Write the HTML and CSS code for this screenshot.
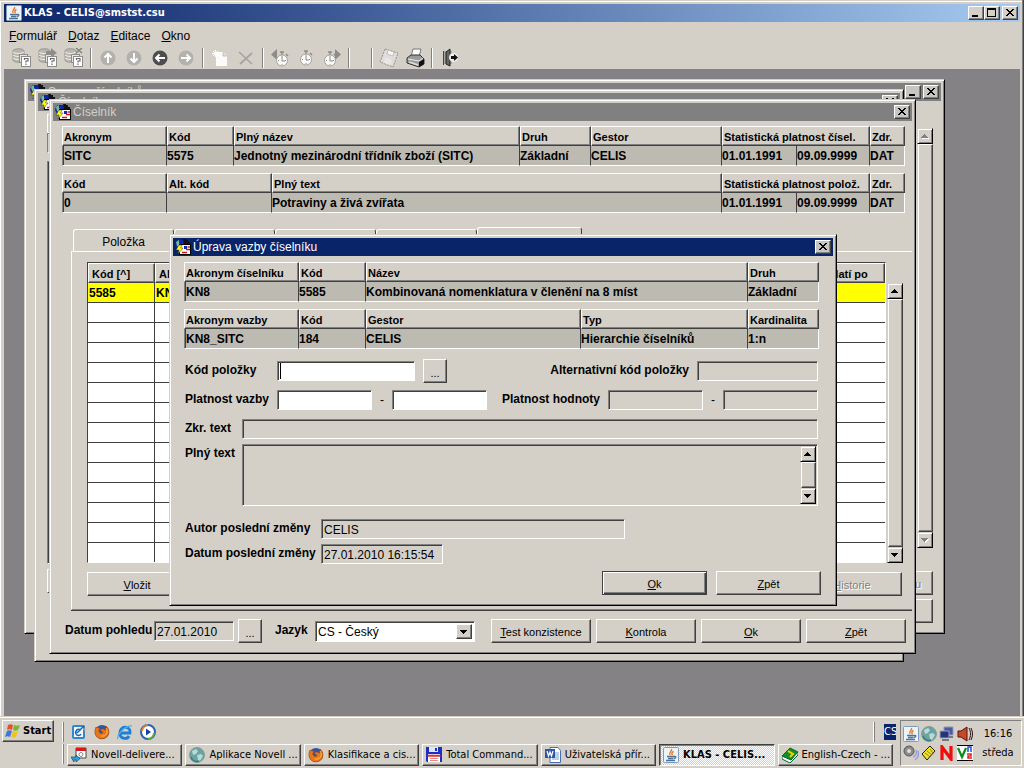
FILE: index.html
```html
<!DOCTYPE html>
<html lang="cs">
<head>
<meta charset="utf-8">
<title>KLAS - CELIS@smstst.csu</title>
<link rel="stylesheet" href="styles.css">
</head>
<body>
<svg class="defs" aria-hidden="true">
  <symbol id="i-java" viewBox="0 0 16 16"><rect x=".5" y=".5" width="15" height="15" rx="1" fill="#eef3f8" stroke="#7d9cba"/><path d="M8.500 2c1 2-3 3-1.500 6M10.500 4.500c-2 1-2 2-1 3.500" stroke="#e8761c" stroke-width="1.400" fill="none"/><path d="M4 9.500h7M11 9.500c3-.5 2 2-.5 2M5 11.500h5M3 13.500h9" stroke="#4b7399" stroke-width="1.300" fill="none"/></symbol>
  <symbol id="i-form" viewBox="0 0 16 16"><path d="M1 3l2-2h5l3 3v5l-4 3-5-2-2-4z" fill="#1424a8"/><path d="M1 3l3-2v3l2 2-1 3-3-2z" fill="#6fbe9c"/><path d="M8 0h3v1h2v2h2v2H9z" fill="#111"/><rect x="4" y="5" width="12" height="11" fill="#000"/><rect x="5" y="6" width="10" height="9" fill="#fff"/><path d="M9 7h3v3H9z" fill="#1428b4"/><path d="M12.500 8H15M11 10.500h4M7 13.500h5" stroke="#d01818" stroke-width="1.300"/><path d="M4 6h3L5.500 9H8l-5 6 1-4H1z" fill="#ff0" stroke="#333" stroke-width=".5"/></symbol>
  <symbol id="i-close" viewBox="0 0 16 14"><path d="M4 3h2v1h1v1h2V4h1V3h2v1h-1v1h-1v1H9v1h1v1h1v1h1v1h-2V9H9V8H7v1H6v1H4V9h1V8h1V7h1V6H6V5H5V4H4z" fill="#000"/></symbol>
  <symbol id="i-up" viewBox="0 0 16 16"><path d="M7 6h1v1h1v1h1v1h1v1H4V9h1V8h1V7h1z"/></symbol>
  <symbol id="i-down" viewBox="0 0 16 16"><path d="M4 6h7v1h-1v1H9v1H8v1H7V9H6V8H5V7H4z"/></symbol>
  <symbol id="i-query" viewBox="0 0 20 20"><path d="M1 3c0-3 11-3 11 0v9c0 3-11 3-11 0z" fill="#bab7b0" stroke="#8d8b87" stroke-width=".8"/><path d="M1 4c2 2 9 2 11 0M1 7c2 2 9 2 11 0M1 10c2 2 9 2 11 0" fill="none" stroke="#f4f2ee"/><rect x="7.500" y="6.500" width="8" height="8" fill="#e9e7e2" stroke="#8c8c8c"/><rect x="9.500" y="8.500" width="9" height="10" fill="#fff" stroke="#8c8c8c"/><path d="M12.500 12v-1.500h3.500V13h-2v1.500M14 15.500v1.500" fill="none" stroke="#686868" stroke-width="1.200"/></symbol>
  <symbol id="i-ff" viewBox="0 0 16 16"><circle cx="8" cy="8" r="7" fill="#32549c"/><path d="M2 3c-4 9 4 14 9 11 5-2 5-9 1-12 1 3 1 4-1 4-2-2-5-1-4 1l2 1c-1 3-5 1-4-2l1-2-2 0z" fill="#e8771c" stroke="#b3480d" stroke-width=".7"/><path d="M12 4c3 4 0 9-5 8" stroke="#ffc13b" fill="none"/></symbol>
  <symbol id="i-globe" viewBox="0 0 16 16"><circle cx="8" cy="8" r="7.500" fill="#69a3a2" stroke="#8a9a9a"/><path d="M3 4l4-2 2 2-2 3-3 1zM8 8l4-1 2 2-3 5-2-1z" fill="#b9dbd5"/><path d="M2 10c1 4 5 5 8 4" stroke="#3c7d80" stroke-width="1.500" fill="none"/></symbol>
  <symbol id="i-clock" viewBox="0 0 14 16"><path d="M5 1h4M7 1v3M11 3l2 2" stroke="#8e8c88" stroke-width="1.500"/><circle cx="7" cy="9.500" r="5.500" fill="#fbfbfa" stroke="#a3a19d"/><path d="M7 6v4h3M7 5v1M7 13v1M3 9.500h1M10 9.500h1" stroke="#8a8885" fill="none"/></symbol>
</svg>

<main class="app">
  <header class="app-title">
    <svg class="ic16"><use href="#i-java"/></svg>
    <h1>KLAS - CELIS@smstst.csu</h1>
    <button class="cap" aria-label="Minimalizovat"><svg viewBox="0 0 16 14"><path d="M4 9h6v2H4z"/></svg></button>
    <button class="cap" aria-label="Maximalizovat"><svg viewBox="0 0 16 14"><path d="M3 2h9v9H3zM4 4v6h7V4z" fill-rule="evenodd"/></svg></button>
    <button class="cap cap-close" aria-label="Zavřít"><svg><use href="#i-close"/></svg></button>
  </header>
  <nav class="menu">
    <a href="#"><u>F</u>ormulář</a><a href="#"><u>D</u>otaz</a><a href="#"><u>E</u>ditace</a><a href="#"><u>O</u>kno</a>
  </nav>
  <div class="toolbar">
    <button aria-label="Zadat dotaz"><svg><use href="#i-query"/></svg></button>
    <button aria-label="Provést dotaz"><svg viewBox="0 0 20 20"><use href="#i-query"/><path d="M8 3h5V0l6 5-6 4V6H8z" fill="#8f8d89"/></svg></button>
    <button aria-label="Zrušit dotaz"><svg viewBox="0 0 20 20"><use href="#i-query"/><path d="M12 0l6 5M18 0l-6 5" stroke="#85837f" stroke-width="1.500"/></svg></button>
    <i class="sep"></i>
    <button aria-label="Nahoru"><svg viewBox="0 0 20 20"><circle cx="10" cy="10" r="7.500" fill="#b3b1ad"/><path d="M10 15V6M6.500 9.500L10 6l3.500 3.500" stroke="#fff" stroke-width="2" fill="none"/></svg></button>
    <button aria-label="Dolů"><svg viewBox="0 0 20 20"><circle cx="10" cy="10" r="7.500" fill="#b3b1ad"/><path d="M10 5v9M6.500 10.500L10 14l3.500-3.500" stroke="#fff" stroke-width="2" fill="none"/></svg></button>
    <button aria-label="Zpět"><svg viewBox="0 0 20 20"><circle cx="10" cy="10" r="7.500" fill="#4d4d4d"/><path d="M15 10H6M9.500 6.500L6 10l3.500 3.500" stroke="#fff" stroke-width="2" fill="none"/></svg></button>
    <button aria-label="Vpřed"><svg viewBox="0 0 20 20"><circle cx="10" cy="10" r="7.500" fill="#b3b1ad"/><path d="M5 10h9M10.500 6.500L14 10l-3.500 3.500" stroke="#fff" stroke-width="2" fill="none"/></svg></button>
    <i class="sep"></i>
    <button aria-label="Nový"><svg viewBox="0 0 20 20"><path d="M6 4h7l4 4v10H6z" fill="#fbfbfa"/><path d="M13 4v4h4" fill="#ddd" stroke="#b5b3af" stroke-width=".7"/><path d="M5.500 2v7M2 5.500h7M3 3l5 5M8 3L3 8" stroke="#fff"/></svg></button>
    <button aria-label="Smazat"><svg viewBox="0 0 20 20"><path d="M3 4l13 12M16 5L4 16" stroke="#a6a4a0" stroke-width="1.700"/></svg></button>
    <i class="sep"></i>
    <button aria-label="Předchozí platnost"><svg viewBox="0 0 20 20"><path d="M7 1v11L1 6.500z" fill="#8e8c88"/><use href="#i-clock" x="5" y="3" width="14" height="16"/></svg></button>
    <button aria-label="Platnost"><svg viewBox="0 0 20 20"><use href="#i-clock" x="3" y="2" width="14" height="16"/></svg></button>
    <button aria-label="Další platnost"><svg viewBox="0 0 20 20"><path d="M13 1v11l6-5.500z" fill="#8e8c88"/><use href="#i-clock" x="1" y="3" width="14" height="16"/></svg></button>
    <i class="sep"></i><i class="sep sep-wide"></i>
    <button aria-label="Uložit"><svg viewBox="0 0 20 20"><path d="M6 1l13 4-5 14-13-5z" fill="#dedddb" stroke="#92908c" stroke-dasharray="2 1"/><path d="M9 2l6 2-1 4-6-2z" fill="#f6f5f3" stroke="#b0aeaa" stroke-width=".7"/><path d="M6 9l7 3-2 5-6-2z" fill="#e8e7e5"/></svg></button>
    <button aria-label="Tisk"><svg viewBox="0 0 20 20"><path d="M8 1h8l-2 8H6z" fill="#fff" stroke="#777"/><path d="M2 10l4-3h9l4 4v5l-5 3-12-4z" fill="#9a9a9a" stroke="#333"/><path d="M3 11l11 2 4-3" stroke="#eee" fill="none"/><path d="M4 14l9 3" stroke="#ddd" stroke-width="1.500"/><path d="M14 14l5-3v5l-5 3z" fill="#111"/></svg></button>
    <i class="sep"></i>
    <button aria-label="Konec"><svg viewBox="0 0 20 20"><path d="M4 3h9v13H4z" fill="#aaa8a4"/><path d="M4.500 3v14" stroke="#444"/><path d="M7 4l4-3v17l-4-2z" fill="#666" stroke="#222"/><circle cx="14.500" cy="9.500" r="4.500" fill="#f0efec"/><path d="M12 8h3V6l4 3.500-4 3.500v-2h-3z" fill="#111"/></svg></button>
  </div>

  <div class="workspace">
    <section class="win win-a" aria-label="Seznam číselníků">
      <header class="bar"><svg class="ic16"><use href="#i-form"/></svg><h2>Seznam číselníků</h2>
        <button class="cap" aria-label="Minimalizovat"><svg viewBox="0 0 16 14"><path d="M4 9h6v2H4z"/></svg></button>
        <button class="cap cap-close" aria-label="Zavřít"><svg><use href="#i-close"/></svg></button></header>
      <div class="a-body">
        <div class="a-list"><div class="a-box"></div>
          <div class="scroll off"><button aria-label="Nahoru"><svg><use href="#i-up"/></svg></button><div class="thumb"></div><button aria-label="Dolů"><svg><use href="#i-down"/></svg></button></div>
        </div>
        <button class="btn end" disabled>u</button>
        <button class="btn" aria-label="Zavřít"></button>
      </div>
    </section>

    <section class="win win-b" aria-label="Číselník">
      <header class="bar"><svg class="ic16"><use href="#i-form"/></svg><h2>Číselník</h2>
        <button class="cap cap-close" aria-label="Zavřít"><svg><use href="#i-close"/></svg></button></header>
      <div class="b-body"><div class="b-head"></div><div class="b-row"></div><div class="b-list"></div><div class="b-foot"></div></div>
    </section>

    <section class="win win-c" aria-label="Číselník SITC">
      <header class="bar"><svg class="ic16"><use href="#i-form"/></svg><h2>Číselník</h2>
        <button class="cap cap-close" aria-label="Zavřít"><svg><use href="#i-close"/></svg></button></header>
      <div class="c-tables">
        <table class="info">
          <colgroup><col class="w105"><col class="w67"><col><col class="w71"><col class="w131"><col class="w75"><col class="w73"><col class="w35"></colgroup>
          <tr><th>Akronym</th><th>Kód</th><th>Plný název</th><th>Druh</th><th>Gestor</th><th colspan="2">Statistická platnost čísel.</th><th>Zdr.</th></tr>
          <tr><td>SITC</td><td>5575</td><td>Jednotný mezinárodní třídník zboží (SITC)</td><td>Základní</td><td>CELIS</td><td>01.01.1991</td><td>09.09.9999</td><td>DAT</td></tr>
        </table>
        <table class="info">
          <colgroup><col class="w105"><col class="w105"><col><col class="w75"><col class="w73"><col class="w35"></colgroup>
          <tr><th>Kód</th><th>Alt. kód</th><th>Plný text</th><th colspan="2">Statistická platnost polož.</th><th>Zdr.</th></tr>
          <tr><td>0</td><td></td><td>Potraviny a živá zvířata</td><td>01.01.1991</td><td>09.09.9999</td><td>DAT</td></tr>
        </table>
      </div>
      <div class="tabs">
        <button class="tab">Položka</button><button class="tab" aria-label="Záložka 2"></button><button class="tab" aria-label="Záložka 3"></button><button class="tab" aria-label="Záložka 4"></button><button class="tab on" aria-label="Záložka 5"></button>
      </div>
      <div class="panel">
        <div class="grid-wrap">
          <table class="grid">
            <colgroup><col class="w67"><col><col class="w61"></colgroup>
            <tr><th>Kód [^]</th><th>Ak</th><th>Platí po</th></tr>
            <tr class="sel"><td>5585</td><td>KN</td><td></td></tr>
            <tr><td></td><td></td><td></td></tr><tr><td></td><td></td><td></td></tr><tr><td></td><td></td><td></td></tr><tr><td></td><td></td><td></td></tr><tr><td></td><td></td><td></td></tr><tr><td></td><td></td><td></td></tr><tr><td></td><td></td><td></td></tr><tr><td></td><td></td><td></td></tr><tr><td></td><td></td><td></td></tr><tr><td></td><td></td><td></td></tr><tr><td></td><td></td><td></td></tr><tr><td></td><td></td><td></td></tr><tr><td></td><td></td><td></td></tr>
          </table>
          <div class="scroll"><button aria-label="Nahoru"><svg><use href="#i-up"/></svg></button><div class="thumb"></div><button aria-label="Dolů"><svg><use href="#i-down"/></svg></button></div>
        </div>
        <div class="panel-btns"><button class="btn"><span><u>V</u>ložit</span></button><button class="btn" disabled><span><u>H</u>istorie</span></button></div>
      </div>
      <div class="c-foot">
        <label for="view" class="l89">Datum pohledu</label><input id="view" class="fld w80" value="27.01.2010" readonly>
        <button class="btn dots">...</button>
        <label for="lang" class="lang">Jazyk</label>
        <div class="combo"><select id="lang"><option>CS - Český</option></select><span class="drop"><svg><use href="#i-down"/></svg></span></div>
        <div class="c-btns"><button class="btn"><span><u>T</u>est konzistence</span></button><button class="btn"><span><u>K</u>ontrola</span></button><button class="btn"><span><u>O</u>k</span></button><button class="btn"><span><u>Z</u>pět</span></button></div>
      </div>
    </section>

    <section class="win win-d" role="dialog" aria-label="Úprava vazby číselníku">
      <header class="bar active"><svg class="ic16"><use href="#i-form"/></svg><h2>Úprava vazby číselníku</h2>
        <button class="cap cap-close" aria-label="Zavřít"><svg><use href="#i-close"/></svg></button></header>
      <div class="d-tables">
        <table class="info">
          <colgroup><col class="w115"><col class="w67"><col><col class="w71"></colgroup>
          <tr><th>Akronym číselníku</th><th>Kód</th><th>Název</th><th>Druh</th></tr>
          <tr><td>KN8</td><td>5585</td><td>Kombinovaná nomenklatura v členění na 8 míst</td><td>Základní</td></tr>
        </table>
        <table class="info">
          <colgroup><col class="w115"><col class="w67"><col><col class="w167"><col class="w71"></colgroup>
          <tr><th>Akronym vazby</th><th>Kód</th><th>Gestor</th><th>Typ</th><th>Kardinalita</th></tr>
          <tr><td>KN8_SITC</td><td>184</td><td>CELIS</td><td>Hierarchie číselníků</td><td>1:n</td></tr>
        </table>
      </div>
      <form class="form" onsubmit="return false">
        <div class="row r1"><label class="l92" for="kod">Kód položky</label><input id="kod" class="fld edit caret w138"><button type="button" class="btn dots">...</button>
          <label class="push" for="alt">Alternativní kód položky</label><input id="alt" class="fld w121" readonly></div>
        <div class="row r2"><label class="l92" for="p1">Platnost vazby</label><input id="p1" class="fld edit w95"><span class="dash">-</span><input aria-label="Platnost vazby do" class="fld edit w95">
          <label class="push" for="h1">Platnost hodnoty</label><input id="h1" class="fld w95" readonly><span class="dash">-</span><input aria-label="Platnost hodnoty do" class="fld w95" readonly></div>
        <div class="row r3"><label class="l57" for="zkr">Zkr. text</label><input id="zkr" class="fld grow" readonly></div>
        <div class="row r4"><label class="l57" for="full">Plný text</label><div class="area"><textarea id="full" readonly></textarea><div class="scroll"><button type="button" aria-label="Nahoru"><svg><use href="#i-up"/></svg></button><div class="thumb"></div><button type="button" aria-label="Dolů"><svg><use href="#i-down"/></svg></button></div></div></div>
        <div class="row r5"><label class="l136" for="autor">Autor poslední změny</label><input id="autor" class="fld w304" value="CELIS" readonly></div>
        <div class="row r6"><label class="l136" for="datum">Datum poslední změny</label><input id="datum" class="fld w122" value="27.01.2010 16:15:54" readonly></div>
        <div class="d-btns"><button class="btn def"><span><u>O</u>k</span></button><button type="button" class="btn"><span><u>Z</u>pět</span></button></div>
      </form>
    </section>
  </div>
</main>

<footer class="taskbar">
  <button class="start"><svg class="ic16" viewBox="0 0 16 16"><path d="M3 2c2-1 3-1 5 0L7 7c-2-1-3-1-5 0z" fill="#e2522b"/><path d="M9 2c2 1 4 1 6 0l-2 5c-2 1-3 1-5 0z" fill="#78b530"/><path d="M2 8c2-1 3-1 5 0l-2 6c-2-1-3-1-5 0z" fill="#3b78d8"/><path d="M8 8c2 1 3 1 5 0l-2 6c-2 1-3 1-5 0z" fill="#f2c21c"/></svg>Start</button>
  <div class="mid">
    <div class="quick"><i class="grip"></i>
      <button aria-label="Pošta"><svg class="ic16" viewBox="0 0 16 16"><rect x="1" y="1" width="13" height="14" rx="2" fill="#2f87d0"/><rect x="3" y="3" width="9" height="10" fill="#f2f8fd"/><path d="M10 6c-4-2-6 1-5 4 1 2 4 2 5 0M6 9l7-7" stroke="#1c68b0" stroke-width="1.500" fill="none"/><path d="M12 4l3 1-2 2z" fill="#e89a2c"/></svg></button>
      <button aria-label="Firefox"><svg class="ic16"><use href="#i-ff"/></svg></button>
      <button aria-label="Internet Explorer"><svg class="ic16" viewBox="0 0 16 16"><path d="M3 9h10c1-7-9-8-10-1s7 8 9 4" stroke="#1d7fd6" stroke-width="2.800" fill="none"/><path d="M1 15c-2-4 8-14 14-13" stroke="#56aef0" stroke-width="1.300" fill="none"/></svg></button>
      <button aria-label="Přehrávač"><svg class="ic16" viewBox="0 0 16 16"><circle cx="8" cy="8" r="7" fill="#fff" stroke="#2a60b8" stroke-width="2"/><path d="M2 7a6.500 6.500 0 0 1 6-6" stroke="#e8772a" stroke-width="2" fill="none"/><path d="M14 9a6.500 6.500 0 0 1-6 6" stroke="#5cae3a" stroke-width="2" fill="none"/><path d="M6 4.500l5 3.500-5 3.500z" fill="#1b3f94"/></svg></button>
      <i class="grip last"></i><span class="cs">CS</span>
    </div>
    <div class="tasks"><i class="grip"></i>
      <button class="task"><svg class="ic16" viewBox="0 0 16 16"><path d="M5 1h10v10H5z" fill="#fff" stroke="#444"/><path d="M5 1h10v3H5z" fill="#d8181c"/><circle cx="10" cy="7.500" r="2" fill="none" stroke="#888"/><path d="M0 10h5V8l4 3.500L5 15v-2H3v2z" fill="#27a3e0" stroke="#135" stroke-width=".6"/></svg><span>Novell-delivere...</span></button>
      <button class="task"><svg class="ic16"><use href="#i-globe"/></svg><span>Aplikace Novell ...</span></button>
      <button class="task"><svg class="ic16"><use href="#i-ff"/></svg><span>Klasifikace a cis...</span></button>
      <button class="task"><svg class="ic16" viewBox="0 0 16 16"><path d="M0 0h16v15H1l-1-1z" fill="#1c2fc4"/><path d="M3 0h9v5H3z" fill="#dfe6ff"/><path d="M9 1h2v3H9z" fill="#1c2fc4"/><path d="M2 7h12v8H2z" fill="#fff"/><path d="M2 8h12v1.500H2zM4 11.500h8M4 13.500h8" fill="#e02020" stroke="#e05050" stroke-width=".7"/></svg><span>Total Command...</span></button>
      <button class="task"><svg class="ic16" viewBox="0 0 16 16"><path d="M5 .5h8l2.500 3v12H5z" fill="#fff" stroke="#4a6fb0"/><path d="M9 6h5M9 8h5M9 10h5M7 12h7" stroke="#7c9bd0"/><rect y="2" width="10" height="9" fill="#2b55a8"/><path d="M2 4l1.500 5L5 5l1.500 4L8 4" stroke="#fff" stroke-width="1.200" fill="none"/></svg><span>Uživatelská přír...</span></button>
      <button class="task on"><svg class="ic16"><use href="#i-java"/></svg><span>KLAS - CELIS...</span></button>
      <button class="task"><svg class="ic16" viewBox="0 0 16 16"><path d="M0 9l8-8 8 4-7 8z" fill="#149020" stroke="#063"/><path d="M0 9v3l8 4 8-8V5l-7 8z" fill="#fff" stroke="#063"/><path d="M6 4l5 3-3 3" stroke="#fc0" stroke-width="2" fill="none"/></svg><span>English-Czech - ...</span></button>
    </div>
  </div>
  <div class="tray">
    <svg class="ic16"><use href="#i-java"/></svg>
    <svg class="ic16"><use href="#i-globe"/></svg>
    <svg class="ic16" viewBox="0 0 16 16"><path d="M5 1h9v8H5z" fill="#4a58b0" stroke="#99a"/><path d="M1 5h9v7H1z" fill="#26337f" stroke="#9aa"/><path d="M3 14h7M10 11h4" stroke="#778" stroke-width="2"/></svg>
    <svg class="ic16" viewBox="0 0 16 16"><path d="M1 5h3l6-4v14l-6-4H1z" fill="#c74a28" stroke="#511"/><path d="M12 2c2 4 2 8 0 12M14 2c2 4 2 8 0 12" stroke="#311" fill="none"/></svg>
    <time>16:16</time>
    <svg class="ic16" viewBox="0 0 16 16"><circle cx="6" cy="6" r="5" fill="#8c8c90" stroke="#555"/><circle cx="6" cy="6" r="2" fill="#ddd"/><path d="M10 12c3-1 4-4 3-7M12 15c4-3 4-6 3-9" stroke="#9b9bd8" stroke-width="1.500" fill="none"/></svg>
    <svg class="ic16" viewBox="0 0 16 16"><path d="M1 9l8-8 5 5-8 9z" fill="#f2e21c" stroke="#221"/><path d="M4 8l5 4M6 6l5 4M9 4l3 4" stroke="#665" stroke-width=".8"/></svg>
    <svg class="ic16" viewBox="0 0 16 16"><path d="M3 15V2l9 12V1" stroke="#f00d0d" stroke-width="3.200" fill="none"/></svg>
    <svg class="ic16" viewBox="0 0 16 16"><path d="M0 0h16v16H0z" fill="#fff"/><path d="M0 .5h16M0 15.500h16" stroke="#000"/><path d="M1 3l4 9 4-9" stroke="#0b8a1e" stroke-width="2.200" fill="none"/><path d="M11 7V2h3v5" stroke="#1c4fe0" stroke-width="1.500" fill="none"/><path d="M10 9h4v2h-3v2h4" stroke="#e02020" stroke-width="1.500" fill="none"/></svg>
    <span>středa</span>
  </div>
</footer>
</body>
</html>
```
FILE: styles.css
```css
:root {
  --face: #d4d0c8;
  --lo: #808080;
  --dark: #404040;
  --ui: "Liberation Sans", Arial, sans-serif;
  --shell: "DejaVu Sans Condensed", "DejaVu Sans", sans-serif;
}
* { box-sizing: border-box; }
body {
  margin: 0;
  height: 100vh;
  display: flex;
  flex-direction: column;
  overflow: hidden;
  background: var(--face);
  font: 12px/14px var(--ui);
  color: #000;
}
h1, h2 { margin: 0; font-size: 12px; font-weight: normal; flex: 1; white-space: nowrap; }
button, input, select, textarea { font: inherit; color: inherit; margin: 0; padding: 0; border: 0; border-radius: 0; background: none; outline: 0; }
a { color: inherit; text-decoration: none; }
label, th, td { font-weight: bold; white-space: nowrap; }
.defs { display: none; }
.ic16 { width: 16px; height: 16px; flex: none; display: block; }

/* application frame */
.app {
  flex: 1;
  min-height: 0;
  display: flex;
  flex-direction: column;
  padding: 4px 4px 0;
  box-shadow: inset -1px 0 var(--dark), inset -2px 0 var(--lo), inset 0 1px var(--face), inset 1px 2px #fff;
}
.app-title {
  display: flex;
  align-items: center;
  height: 18px;
  padding: 0 2px;
  color: #fff;
  background: linear-gradient(90deg, #0a246a, #a6caf0);
}
.app-title h1 { font: bold 11px/16px var(--shell); padding-left: 2px; }
.cap { width: 16px; height: 14px; flex: none; background: var(--face); border: 1px solid; border-color: #fff var(--dark) var(--dark) #fff; box-shadow: inset -1px -1px var(--lo); }
.cap svg { display: block; width: 16px; height: 14px; margin: -1px; }
.cap-close { margin-left: 2px; }
.menu { display: flex; gap: 11px; padding: 7px 5px 2px; }
.toolbar { display: flex; align-items: center; height: 24px; padding: 2px 5px 0; }
.toolbar button { width: 26px; height: 22px; display: flex; align-items: center; justify-content: center; }
.toolbar svg { width: 20px; height: 20px; }
.sep { width: 2px; height: 20px; margin: 0 3px; background: linear-gradient(90deg, var(--lo) 50%, #fff 50%); }
.sep-wide { margin-left: 18px; }
.workspace { position: relative; flex: 1; min-height: 0; overflow: hidden; background: #848284; }

/* windows */
.win {
  position: absolute;
  padding: 3px;
  background: var(--face);
  border: 1px solid;
  border-color: var(--face) #000 #000 var(--face);
  box-shadow: inset 1px 1px #fff, inset -1px -1px var(--lo);
}
.win-a { left: 20px; top: 10px; width: 921px; }
.win-b { left: 30px; top: 20px; width: 870px; }
.win-c { left: 45px; top: 30px; width: 867px; }
.win-d { left: 165px; top: 165px; width: 668px; }
.bar { display: flex; align-items: center; height: 18px; padding: 0 2px; background: #808080; color: #d4d0c8; }
.bar h2 { padding-left: 2px; }
.bar.active { background: #0a246a; color: #fff; }
.bar .cap { background: #c8c6c2; }

/* buttons and fields */
.btn {
  height: 24px;
  min-width: 100px;
  padding-top: 2px;
  font-size: 11px;
  background: var(--face);
  border: 1px solid;
  border-color: #fff var(--dark) var(--dark) #fff;
  box-shadow: inset -1px -1px var(--lo);
}
.btn u { text-underline-offset: 1px; }
.btn:disabled { color: #808080; text-shadow: 1px 1px #fff; }
.btn.dots { min-width: 24px; width: 24px; padding-top: 4px; }
.btn.def { border-color: var(--dark); box-shadow: inset 1px 1px #fff, inset -1px -1px var(--dark), inset -2px -2px var(--lo); }
.fld {
  height: 20px;
  padding: 2px 2px 0 2px;
  min-width: 0;
  background: var(--face);
  border: 1px solid;
  border-color: var(--lo) #fff #fff var(--lo);
  box-shadow: inset 1px 1px var(--dark);
}
.edit { background: #fff; }
.caret { background: linear-gradient(#000, #000) 2px 1px / 1px 16px no-repeat #fff; }
.w35 { width: 35px; }
.w61 { width: 61px; }
.w67 { width: 67px; }
.w71 { width: 71px; }
.w73 { width: 73px; }
.w75 { width: 75px; }
.w80 { width: 80px; }
.w95 { width: 95px; }
.w105 { width: 105px; }
.w115 { width: 115px; }
.w121 { width: 121px; }
.w122 { width: 122px; }
.w131 { width: 131px; }
.w138 { width: 138px; }
.w167 { width: 167px; }
.w304 { width: 304px; }
.grow { flex: 1; }

.scroll { width: 16px; display: flex; flex-direction: column; flex: none; }
.scroll button { width: 16px; height: 16px; flex: none; border: 1px solid; border-color: var(--face) #000 #000 var(--face); box-shadow: inset 1px 1px #fff, inset -1px -1px var(--lo); }
.scroll svg { display: block; width: 16px; height: 16px; margin: -1px; }
.thumb { flex: 1; margin-left: 1px; border: 1px solid; border-color: #fff var(--dark) var(--dark) #fff; box-shadow: inset -1px -1px var(--lo); }
.scroll.off svg { fill: #808080; filter: drop-shadow(1px 1px #fff); }

/* read-only record tables */
.info { width: 100%; table-layout: fixed; border-collapse: separate; border-spacing: 0; margin-bottom: 7px; }
.info th, .grid th {
  height: 20px;
  padding: 2px 0 0 1px;
  font-size: 11px;
  line-height: 14px;
  text-align: left;
  overflow: hidden;
  background: var(--face);
  border: 1px solid;
  border-color: #fff var(--dark) var(--dark) #fff;
  box-shadow: inset -1px -1px var(--lo);
}
.info td { height: 20px; padding: 0; background: #bdbab2; border-right: 1px solid var(--dark); border-bottom: 1px solid #fff; }
.info td:first-child { padding-left: 1px; border-left: 1px solid var(--lo); box-shadow: inset 1px 0 var(--dark); }
.info td:last-child { border-right-color: #fff; }

/* back windows */
.a-body { display: flex; flex-direction: column; align-items: flex-end; padding: 4px 8px 7px 12px; }
.a-list { display: flex; align-self: stretch; height: 443px; }
.a-box { flex: 1; border-right: 1px solid #fff; margin-right: 1px; }
.a-list .scroll { margin-top: 23px; }
.a-body .btn { width: 100px; margin-top: 23px; }
.a-body .btn + .btn { margin-top: 4px; }
.a-body .end { text-align: right; padding-right: 11px; }
.b-body { padding: 3px 12px 65px 9px; }
.b-head { height: 19px; border: 1px solid #fff; }
.b-row { height: 20px; border: 1px solid; border-color: var(--lo) #fff #fff var(--lo); }
.b-list { height: 403px; margin-top: 8px; border: 1px solid; border-color: var(--lo) #fff #fff var(--lo); box-shadow: inset 1px 1px var(--dark); }
.b-foot { height: 24px; margin-top: 5px; border: 1px solid; border-color: #fff var(--dark) var(--dark) #fff; }

/* code list window */
.c-tables { padding: 5px 7px 0 9px; }
.tabs { display: flex; align-items: flex-end; height: 24px; margin-top: 14px; padding-left: 20px; }
.c-tables .info:last-child { margin-bottom: 0; }
.tab { width: 101px; height: 22px; padding-top: 3px; border: 1px solid; border-color: #fff var(--dark) transparent #fff; border-radius: 3px 3px 0 0; border-bottom: 0; }
.tab.on { width: 105px; height: 24px; }
.panel { margin-left: 18px; padding: 10px 0 13px 15px; border-left: 1px solid #fff; border-top: 1px solid #fff; border-bottom: 1px solid var(--lo); box-shadow: 0 1px var(--dark); }
.grid-wrap { display: flex; gap: 1px; padding-right: 9px; }
.grid { flex: 1; table-layout: fixed; border-collapse: separate; border-spacing: 0; background: #fff; border: 1px solid; border-color: var(--dark) #fff #fff var(--dark); }
.grid th { padding-left: 3px; }
.grid td { height: 20px; padding: 0 0 0 1px; border-right: 1px solid var(--dark); border-bottom: 1px solid var(--dark); }
.grid td:last-child { border-right: 0; }
.grid tr:last-child td { height: 19px; border-bottom: 0; }
.grid .sel td { background: #ff0; }
.grid-wrap .scroll { margin-top: 21px; }
.panel-btns { display: flex; justify-content: space-between; padding: 9px 10px 0 0; }
.c-foot { display: flex; align-items: center; padding: 9px 6px 7px 12px; }
.c-foot .dots { margin-left: 4px; }
.l89 { width: 89px; }
.c-foot label { padding-bottom: 2px; }
.lang { width: 40px; margin-left: 13px; }
.combo { display: flex; width: 160px; height: 21px; padding: 2px; background: #fff; border: 1px solid; border-color: var(--lo) #fff #fff var(--lo); box-shadow: inset 1px 1px var(--dark); }
.combo select { flex: 1; appearance: none; padding-top: 1px; }
.drop { width: 16px; border: 1px solid; border-color: #fff var(--dark) var(--dark) #fff; background: var(--face); box-shadow: inset -1px -1px var(--lo); }
.drop svg { display: block; width: 16px; height: 16px; margin: -1px; }
.c-btns { display: flex; gap: 5px; margin-left: auto; }

/* relation dialog */
.d-tables { padding: 6px 14px 0 11px; }
.form { padding: 3px 15px 7px 12px; }
.row { display: flex; align-items: center; }
.row label { padding-bottom: 2px; }
.r2 { margin-top: 7px; }
.r3 { margin-top: 9px; }
.r4 { margin-top: 5px; align-items: flex-start; }
.r4 label { padding-top: 2px; }
.r5 { margin-top: 13px; }
.r6 { margin-top: 5px; }
.l92 { width: 92px; }
.l57 { width: 57px; }
.l136 { width: 136px; }
.row .dots { margin-left: 8px; }
.push { margin: 0 8px 0 auto; }
.dash { width: 20px; text-align: center; }
.area { flex: 1; display: flex; height: 62px; padding: 1px; border: 1px solid; border-color: var(--lo) #fff #fff var(--lo); box-shadow: inset 1px 1px var(--dark); }
.area textarea { flex: 1; resize: none; }
.d-btns { display: flex; justify-content: flex-end; gap: 9px; margin: 7px -3px 0 0; }
.d-btns .btn { min-width: 105px; }

/* taskbar */
.taskbar { display: flex; gap: 8px; height: 52px; padding: 4px 2px 2px; background: var(--face); box-shadow: inset 0 1px var(--face), inset 0 2px #fff; font: 11px/14px var(--shell); }
.start { display: flex; align-items: center; gap: 2px; width: 52px; height: 22px; padding-left: 2px; font-weight: bold; border: 1px solid; border-color: #fff var(--dark) var(--dark) #fff; box-shadow: inset -1px -1px var(--lo); }
.mid { flex: 1; min-width: 0; }
.quick { display: flex; align-items: center; height: 24px; gap: 7px; }
.grip { width: 2px; height: 20px; flex: none; background: linear-gradient(90deg, #fff 50%, var(--lo) 50%); }
.quick .last { margin-left: auto; }
.cs { width: 12px; height: 16px; overflow: hidden; margin-left: 2px; background: #0a246a; color: #fff; line-height: 16px; }
.tasks { display: flex; gap: 3px; height: 22px; padding-right: 3px; }
.task { flex: 1; min-width: 0; display: flex; align-items: center; gap: 4px; padding-left: 3px; white-space: nowrap; border: 1px solid; border-color: #fff var(--dark) var(--dark) #fff; box-shadow: inset -1px -1px var(--lo); }
.task span { overflow: hidden; }
.task.on { font-weight: bold; border-color: var(--dark) #fff #fff var(--dark); box-shadow: inset 1px 1px var(--lo); background: repeating-conic-gradient(#fff 0 25%, var(--face) 0 50%) 0 0 / 2px 2px; }
.tray { display: grid; grid-template-columns: 16px 16px 16px 16px 1fr; gap: 3px 2px; align-content: center; align-items: center; justify-items: center; width: 122px; padding: 1px 0 0 2px; border: 1px solid; border-color: var(--lo) #fff #fff var(--lo); margin-left: -4px; }
```
